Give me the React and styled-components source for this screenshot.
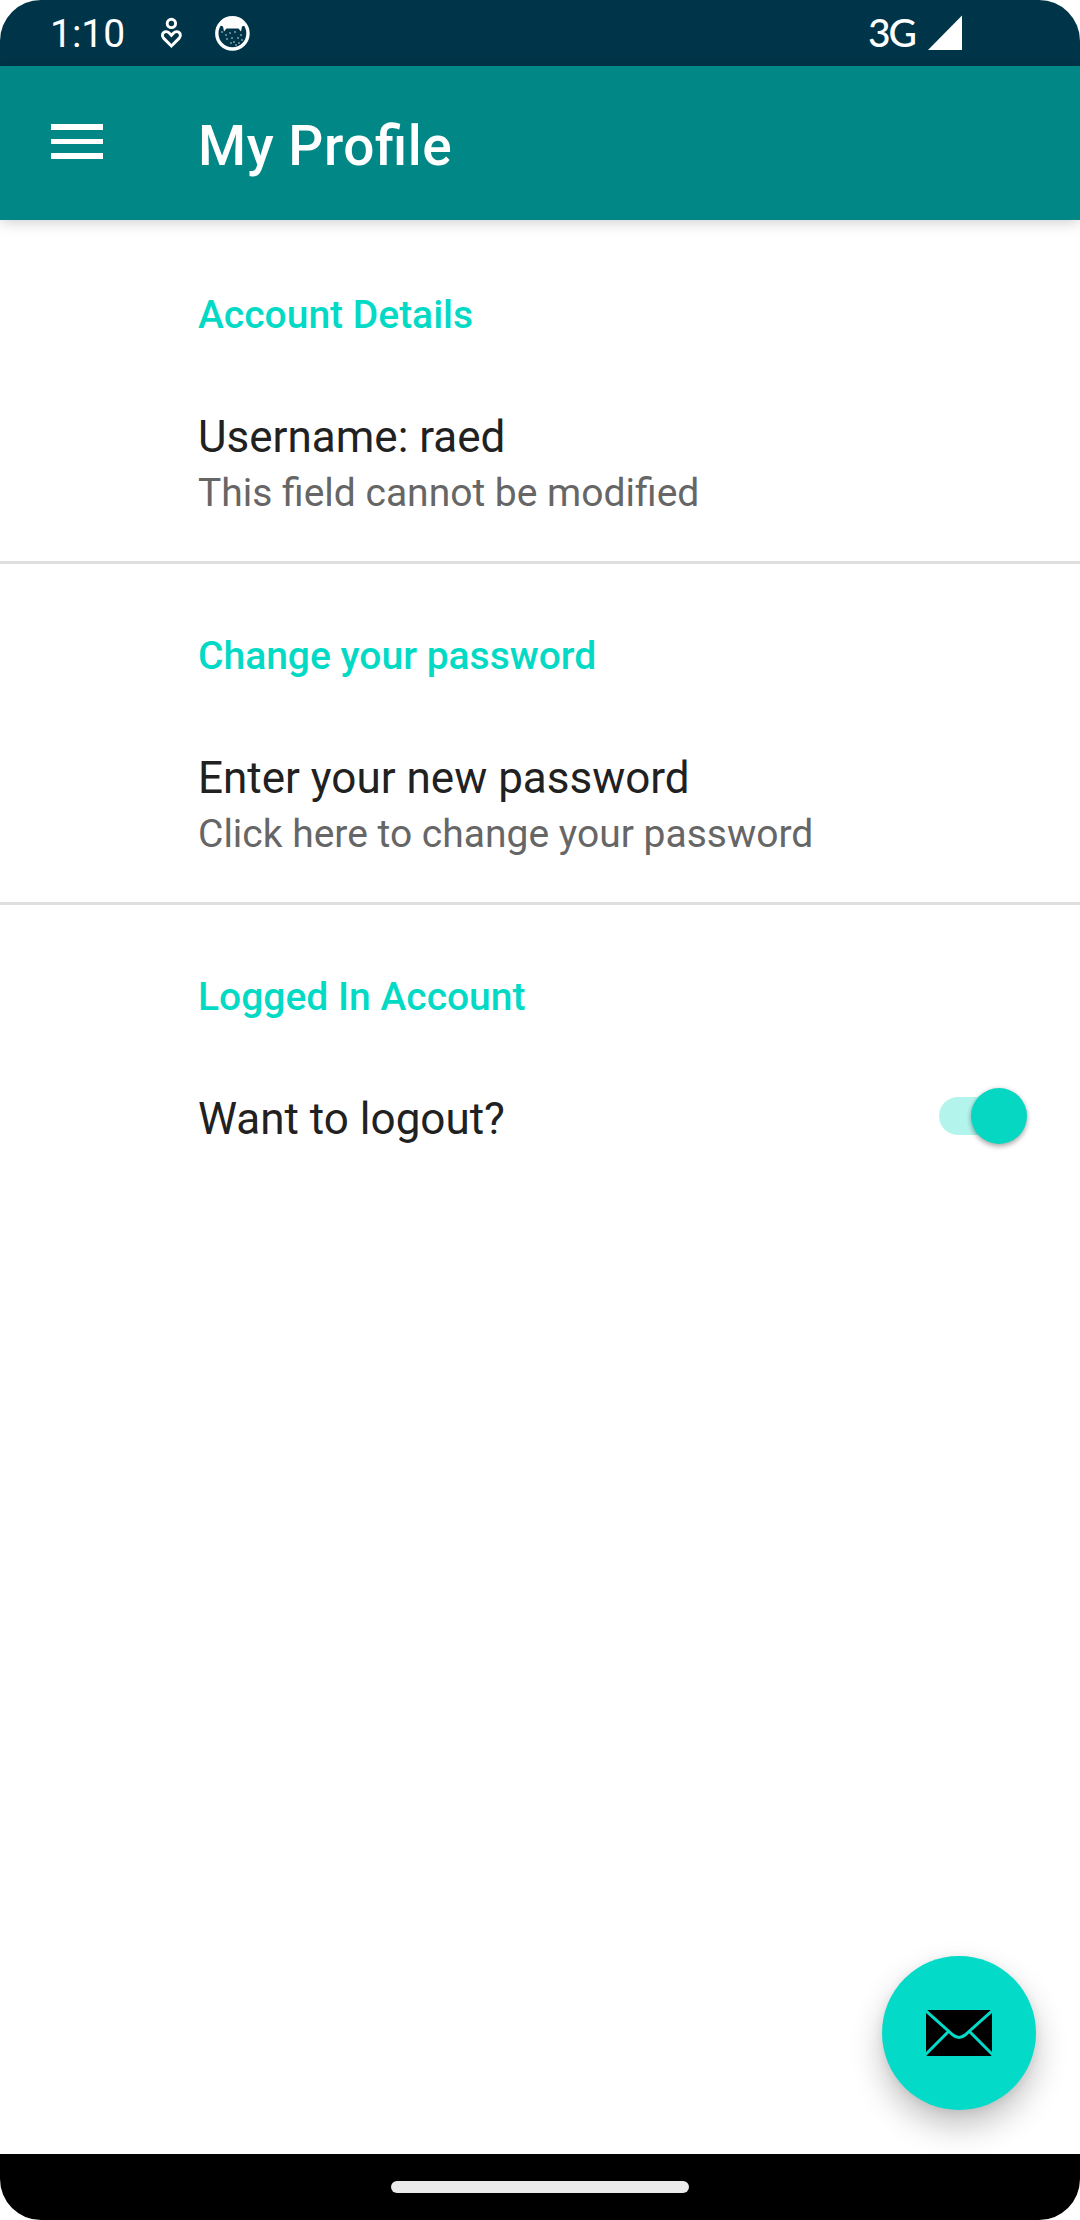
import React from "react";
import styled, { createGlobalStyle } from "styled-components";

const GlobalStyle = createGlobalStyle`
  body { margin: 0; background: #fff; }
  * { box-sizing: border-box; }
`;

const Screen = styled.main`
  position: relative;
  display: flex;
  flex-direction: column;
  width: 1080px;
  height: 2220px;
  overflow: hidden;
  border-radius: 41px;
  background: #fff;
  color: #212121;
  font-family: Roboto, "Liberation Sans", sans-serif;
`;

const StatusBar = styled.header`
  display: flex;
  flex: none;
  justify-content: space-between;
  height: 66px;
  padding: 0 118px 0 50px;
  background: #003549;
  color: #fff;
`;

const StatusGroup = styled.div`
  display: flex;
  align-items: flex-start;
`;

const Clock = styled.span`
  width: 110px;
  font-size: 39px;
  line-height: 69px;
`;

const Network = styled.span`
  margin-right: 13px;
  font-family: Lato, Roboto, sans-serif;
  font-size: 39px;
  font-weight: 500;
  letter-spacing: -2px;
  line-height: 64px;
`;

const StatusIcon = styled.svg`
  display: block;
  flex: none;
  margin-right: ${(p) => p.$gap || 0}px;
`;

const AppBar = styled.nav`
  display: flex;
  flex: none;
  align-items: center;
  height: 154px;
  padding: 0 51px;
  background: #018786;
  box-shadow: 0 2px 14px rgba(0, 0, 0, 0.2);
`;

const MenuButton = styled.button`
  display: flex;
  flex-direction: column;
  gap: 9px;
  width: 52px;
  margin: 0 95px 3px 0;
  padding: 0;
  border: 0;
  background: none;
`;

const MenuLine = styled.span`
  height: 5.5px;
  background: #fff;
`;

const Title = styled.h1`
  margin: 6px 0 0;
  color: #fff;
  font-size: 55px;
  font-weight: 500;
  letter-spacing: 0.55px;
  font-feature-settings: "liga" 1;
  line-height: 64px;
`;

const Settings = styled.div`
  flex: 1;
`;

const Section = styled.section`
  height: 341px;
  padding: ${(p) => (p.$divided ? 70 : 73)}px 53px 0 198px;
  border-top: ${(p) => (p.$divided ? "3px solid #dfdfdf" : "0")};
`;

const Category = styled.h2`
  margin: 0;
  color: #03dac5;
  font-size: 39px;
  font-weight: 500;
  line-height: 44px;
`;

const Preference = styled.div`
  display: flex;
  align-items: flex-start;
  justify-content: space-between;
  padding-top: 74px;
`;

const PreferenceTitle = styled.div`
  font-size: 44px;
  line-height: 52px;
`;

const Summary = styled.div`
  color: #666;
  font-size: 39px;
  line-height: 60px;
`;

const Switch = styled.button`
  display: flex;
  align-items: center;
  justify-content: flex-end;
  width: 88px;
  height: 38px;
  margin-top: 4px;
  padding: 0;
  border: 0;
  border-radius: 19px;
  background: linear-gradient(90deg, #b3f4ed 82px, transparent 82px);
`;

const Thumb = styled.span`
  flex: none;
  width: 56px;
  height: 56px;
  border-radius: 50%;
  background: #05d7c3;
  box-shadow: 0 3px 5px rgba(0, 0, 0, 0.27), 0 0 5px rgba(0, 0, 0, 0.12);
`;

const Fab = styled.button`
  position: absolute;
  right: 44px;
  bottom: 110px;
  display: grid;
  place-items: center;
  width: 154px;
  height: 154px;
  padding: 0;
  border: 0;
  border-radius: 50%;
  background: #03dac8;
  box-shadow: 0 16px 32px rgba(0, 0, 0, 0.24), 0 2px 10px rgba(0, 0, 0, 0.08);
`;

const NavigationBar = styled.footer`
  position: relative;
  display: flex;
  flex: none;
  align-items: center;
  justify-content: center;
  height: 66px;
  background: #000;
`;

const HomeHandle = styled.span`
  width: 298px;
  height: 12px;
  border-radius: 6px;
  background: #ebebeb;
`;

const specks = [
  [11, 19], [15, 17], [20, 16], [26, 19], [12, 23], [17, 22], [19, 26],
  [23, 22], [27, 24], [16, 27], [21, 29], [7, 16], [24, 27],
];

function HeartPerson() {
  return (
    <StatusIcon $gap={31} width="24" height="66" viewBox="0 0 24 66" fill="none" stroke="#fff" strokeWidth="2.9">
      <circle cx="11.4" cy="23.4" r="4.2" />
      <path d="M11.4 46 3.8 38.4C-.2 34.1 5.4 29.2 9.2 33.1l2.2 2.3 2.2-2.3c3.8-3.9 9.4 1 5.4 5.3Z" />
    </StatusIcon>
  );
}

function CatBadge() {
  return (
    <StatusIcon width="35" height="66" viewBox="0 -16 35 66">
      <circle cx="17.4" cy="17.4" r="15.6" fill="none" stroke="#fff" strokeWidth="3.4" />
      <path d="M4 9C9-1 26-1 31 9L27 10.5 26 15.5 23.5 12.5h-12L9 15.5 8 10.5Z" fill="#fff" />
      {specks.map(([x, y]) => (
        <circle key={`${x}-${y}`} cx={x} cy={y} r=".8" fill="#fff" opacity=".85" />
      ))}
    </StatusIcon>
  );
}

function Envelope() {
  return (
    <svg width="66" height="46" viewBox="0 0 66 46">
      <rect width="66" height="46" rx="1" />
      <path
        d="M-1 0 27 25Q33 30 39 25L67 0M-1 45 22 22M67 45 44 22"
        fill="none"
        stroke="#03dac8"
        strokeWidth="3"
      />
    </svg>
  );
}

export default function App() {
  return (
    <>
      <GlobalStyle />
      <Screen>
        <StatusBar>
          <StatusGroup>
            <Clock>1:10</Clock>
            <HeartPerson />
            <CatBadge />
          </StatusGroup>
          <StatusGroup>
            <Network>3G</Network>
            <StatusIcon width="34" height="66" viewBox="0 0 34 66">
              <path d="M34 15.5V50H0Z" fill="#fff" />
            </StatusIcon>
          </StatusGroup>
        </StatusBar>
        <AppBar>
          <MenuButton aria-label="Menu">
            <MenuLine />
            <MenuLine />
            <MenuLine />
          </MenuButton>
          <Title>My Profile</Title>
        </AppBar>
        <Settings>
          <Section>
            <Category>Account Details</Category>
            <Preference>
              <div>
                <PreferenceTitle>Username: raed</PreferenceTitle>
                <Summary>This field cannot be modified</Summary>
              </div>
            </Preference>
          </Section>
          <Section $divided>
            <Category>Change your password</Category>
            <Preference>
              <div>
                <PreferenceTitle>Enter your new password</PreferenceTitle>
                <Summary>Click here to change your password</Summary>
              </div>
            </Preference>
          </Section>
          <Section $divided>
            <Category>Logged In Account</Category>
            <Preference>
              <PreferenceTitle>Want to logout?</PreferenceTitle>
              <Switch aria-label="Logout">
                <Thumb />
              </Switch>
            </Preference>
          </Section>
        </Settings>
        <Fab aria-label="Send email">
          <Envelope />
        </Fab>
        <NavigationBar>
          <HomeHandle />
        </NavigationBar>
      </Screen>
    </>
  );
}
